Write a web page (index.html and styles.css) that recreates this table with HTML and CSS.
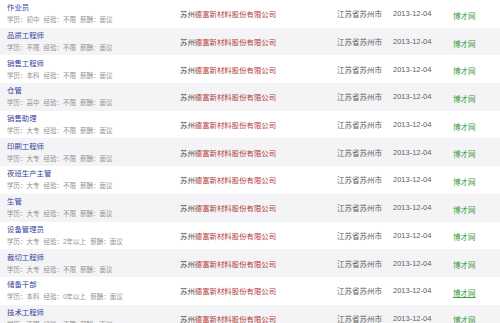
FILE: index.html
```html
<!DOCTYPE html>
<html lang="zh-CN">
<head>
    <meta charset="UTF-8">
    <title>招聘信息</title>
    <link rel="stylesheet" href="styles.css">
</head>
<body>

<div class="job-list">
    <div class="job-row">
        <div class="job-info">
            <a href="#" class="job-title">作业员</a>
            <div class="job-meta"><span>学历：初中</span><span>经验：不限</span><span>薪酬：面议</span></div>
        </div>
        <div class="company">苏州<em>德富新材料股份有限公司</em></div>
        <div class="city">江苏省苏州市</div>
        <div class="date">2013-12-04</div>
        <div class="source"><a href="#">博才网</a></div>
    </div>
    <div class="job-row">
        <div class="job-info">
            <a href="#" class="job-title">品质工程师</a>
            <div class="job-meta"><span>学历：不限</span><span>经验：不限</span><span>薪酬：面议</span></div>
        </div>
        <div class="company">苏州<em>德富新材料股份有限公司</em></div>
        <div class="city">江苏省苏州市</div>
        <div class="date">2013-12-04</div>
        <div class="source"><a href="#">博才网</a></div>
    </div>
    <div class="job-row">
        <div class="job-info">
            <a href="#" class="job-title">销售工程师</a>
            <div class="job-meta"><span>学历：本科</span><span>经验：不限</span><span>薪酬：面议</span></div>
        </div>
        <div class="company">苏州<em>德富新材料股份有限公司</em></div>
        <div class="city">江苏省苏州市</div>
        <div class="date">2013-12-04</div>
        <div class="source"><a href="#">博才网</a></div>
    </div>
    <div class="job-row">
        <div class="job-info">
            <a href="#" class="job-title">仓管</a>
            <div class="job-meta"><span>学历：高中</span><span>经验：不限</span><span>薪酬：面议</span></div>
        </div>
        <div class="company">苏州<em>德富新材料股份有限公司</em></div>
        <div class="city">江苏省苏州市</div>
        <div class="date">2013-12-04</div>
        <div class="source"><a href="#">博才网</a></div>
    </div>
    <div class="job-row">
        <div class="job-info">
            <a href="#" class="job-title">销售助理</a>
            <div class="job-meta"><span>学历：大专</span><span>经验：不限</span><span>薪酬：面议</span></div>
        </div>
        <div class="company">苏州<em>德富新材料股份有限公司</em></div>
        <div class="city">江苏省苏州市</div>
        <div class="date">2013-12-04</div>
        <div class="source"><a href="#">博才网</a></div>
    </div>
    <div class="job-row">
        <div class="job-info">
            <a href="#" class="job-title">印刷工程师</a>
            <div class="job-meta"><span>学历：大专</span><span>经验：不限</span><span>薪酬：面议</span></div>
        </div>
        <div class="company">苏州<em>德富新材料股份有限公司</em></div>
        <div class="city">江苏省苏州市</div>
        <div class="date">2013-12-04</div>
        <div class="source"><a href="#">博才网</a></div>
    </div>
    <div class="job-row">
        <div class="job-info">
            <a href="#" class="job-title">夜班生产主管</a>
            <div class="job-meta"><span>学历：大专</span><span>经验：不限</span><span>薪酬：面议</span></div>
        </div>
        <div class="company">苏州<em>德富新材料股份有限公司</em></div>
        <div class="city">江苏省苏州市</div>
        <div class="date">2013-12-04</div>
        <div class="source"><a href="#">博才网</a></div>
    </div>
    <div class="job-row">
        <div class="job-info">
            <a href="#" class="job-title">生管</a>
            <div class="job-meta"><span>学历：大专</span><span>经验：不限</span><span>薪酬：面议</span></div>
        </div>
        <div class="company">苏州<em>德富新材料股份有限公司</em></div>
        <div class="city">江苏省苏州市</div>
        <div class="date">2013-12-04</div>
        <div class="source"><a href="#">博才网</a></div>
    </div>
    <div class="job-row">
        <div class="job-info">
            <a href="#" class="job-title">设备管理员</a>
            <div class="job-meta"><span>学历：大专</span><span>经验：2年以上</span><span>薪酬：面议</span></div>
        </div>
        <div class="company">苏州<em>德富新材料股份有限公司</em></div>
        <div class="city">江苏省苏州市</div>
        <div class="date">2013-12-04</div>
        <div class="source"><a href="#">博才网</a></div>
    </div>
    <div class="job-row">
        <div class="job-info">
            <a href="#" class="job-title">裁切工程师</a>
            <div class="job-meta"><span>学历：大专</span><span>经验：不限</span><span>薪酬：面议</span></div>
        </div>
        <div class="company">苏州<em>德富新材料股份有限公司</em></div>
        <div class="city">江苏省苏州市</div>
        <div class="date">2013-12-04</div>
        <div class="source"><a href="#">博才网</a></div>
    </div>
    <div class="job-row">
        <div class="job-info">
            <a href="#" class="job-title">储备干部</a>
            <div class="job-meta"><span>学历：本科</span><span>经验：0年以上</span><span>薪酬：面议</span></div>
        </div>
        <div class="company">苏州<em>德富新材料股份有限公司</em></div>
        <div class="city">江苏省苏州市</div>
        <div class="date">2013-12-04</div>
        <div class="source"><a href="#" class="active">博才网</a></div>
    </div>
    <div class="job-row">
        <div class="job-info">
            <a href="#" class="job-title">技术工程师</a>
            <div class="job-meta"><span>学历：不限</span><span>经验：不限</span><span>薪酬：面议</span></div>
        </div>
        <div class="company">苏州<em>德富新材料股份有限公司</em></div>
        <div class="city">江苏省苏州市</div>
        <div class="date">2013-12-04</div>
        <div class="source"><a href="#">博才网</a></div>
    </div>
</div>

</body>
</html>
```

FILE: styles.css
```css
body {
    margin: 0;
    padding: 0;
    background-color: #fff;
    font-family: "Liberation Sans", "Noto Sans CJK SC", sans-serif;
    color: #555;
}

.job-list {
    width: 500px;
}

.job-row {
    display: grid;
    grid-template-columns: 173px 157px 56px 60px 1fr;
    align-items: center;
    height: 27.7px;
    overflow: hidden;
}
.job-row:nth-child(even) {
    background-color: #f4f4f6;
}
.job-row > div {
    padding-left: 7px;
    white-space: nowrap;
}

.job-title {
    display: block;
    font-size: 7.4px;
    line-height: 9px;
    color: #34429a;
    text-decoration: none;
}
.job-meta {
    margin-top: 4px;
    font-size: 6.5px;
    line-height: 8px;
    color: #929292;
}
.job-meta span {
    margin-right: 4px;
}

.company {
    font-size: 7.4px;
    color: #4a4a4a;
}
.company em {
    font-style: normal;
    color: #b03a38;
}

.city {
    font-size: 7.5px;
    color: #5e5e5e;
}
.date {
    font-size: 7.5px;
    color: #5e5e5e;
}

.source a {
    font-size: 7.5px;
    color: #3a9a3a;
    text-decoration: none;
}
.source a.active {
    text-decoration: underline;
}
```
